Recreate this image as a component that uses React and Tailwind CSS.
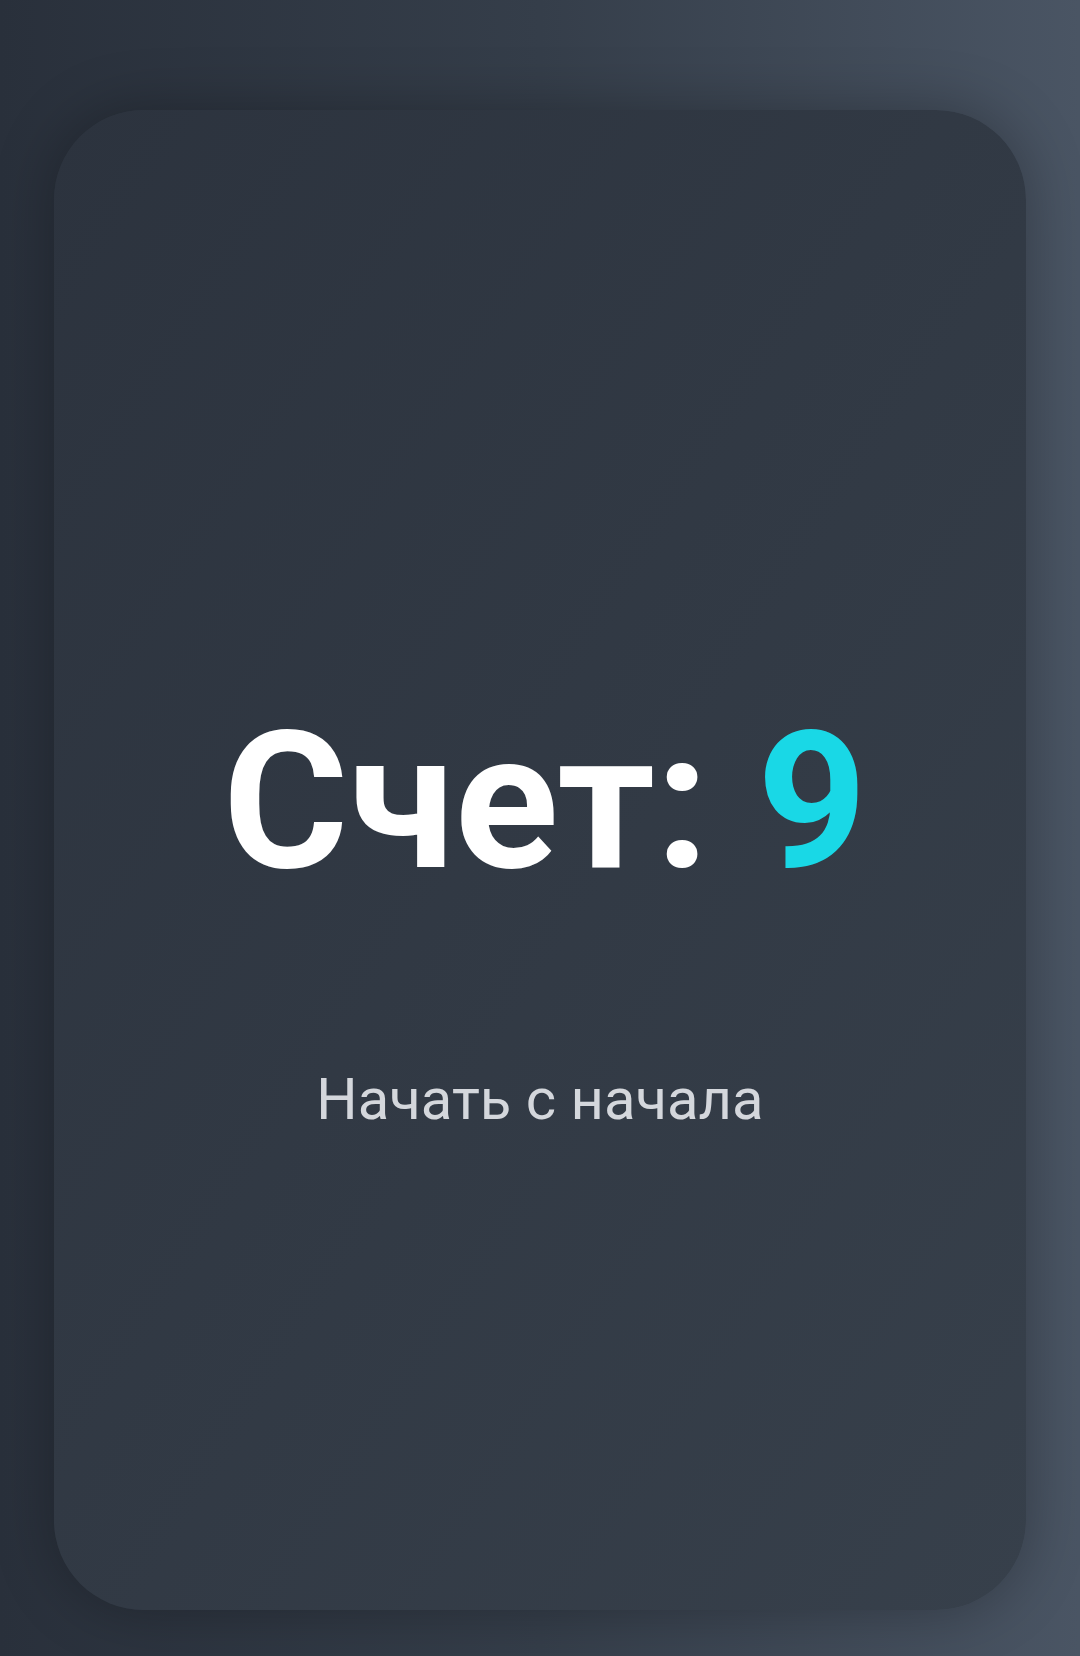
import React, { useState } from "react";

export default function App() {
  const [score, setScore] = useState(9);

  return (
    <div
      className="w-[1080px] h-[1656px] bg-gradient-to-r from-[#29303b] via-[#353e4a] to-[#4a5564] pt-[110px] px-[54px]"
      style={{ fontFamily: "Roboto, 'Noto Sans', sans-serif" }}
    >
      {/* Card */}
      <div className="h-[1500px] rounded-[90px] bg-gradient-to-br from-[#2c333e] to-[#37404b] shadow-[0_0_60px_rgba(0,0,0,0.28)] flex flex-col items-center pt-[596px]">
        <h1 className="ml-[10px] text-[192px] leading-none font-bold text-white">
          Счет: <span className="text-[#19d8e6]">{score}</span>
        </h1>
        <button
          onClick={() => setScore(0)}
          className="mt-[172px] text-[58px] leading-none text-[#d4d7dc]"
        >
          Начать с начала
        </button>
      </div>
    </div>
  );
}
